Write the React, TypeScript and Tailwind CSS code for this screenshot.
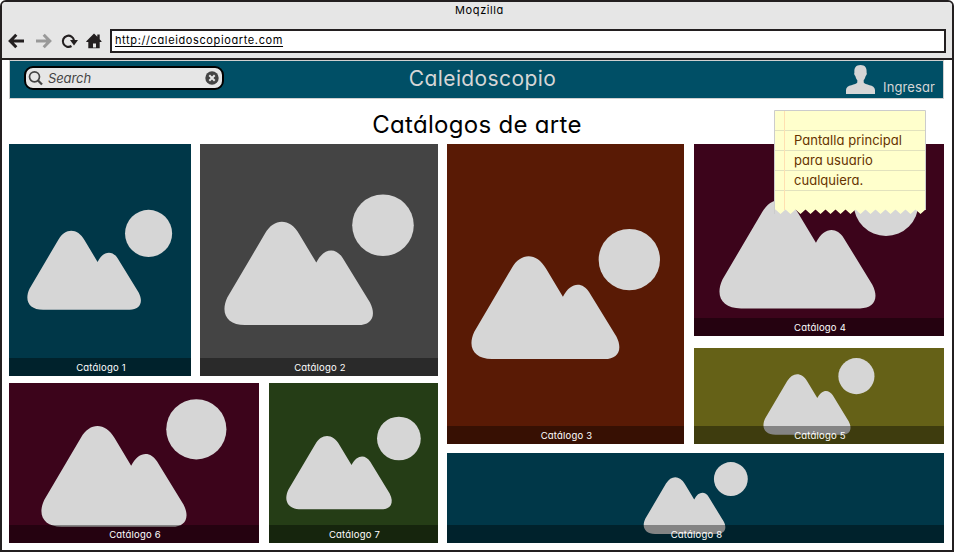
import React from "react";

function Landscape() {
  return (
    <svg viewBox="0 0 190.4 131" className="h-4/5 w-4/5 overflow-visible" fill="#d6d6d6">
      <path d="M3.3 103.3 L41 39.3 C50 23.5 66 23.5 75.3 40 L92.3 68.3 C100 53 112 53 118.7 63.7 L146 108.3 C153 122 147 130.8 134.3 130.8 H21 C3 130.8 -4 119 3.3 103.3Z" />
      <circle cx="159" cy="31" r="30.8" />
    </svg>
  );
}

function Tile({ n, className }: { n: number; className: string }) {
  return (
    <div className={`relative flex shrink-0 items-center justify-center ${className}`}>
      <Landscape />
      <div className="absolute inset-x-0 bottom-0 flex h-[18px] items-center justify-center bg-black/38 pt-[2px] pl-[2px] text-[9.5px] leading-none tracking-[0.2px] text-white">
        Catálogo {n}
      </div>
    </div>
  );
}

function Toolbar() {
  return (
    <div className="flex h-[58px] flex-col border-b-2 border-[#231f20] bg-[#e6e6e6]">
      <div className="h-[27px] pt-[2px] pl-[5px] text-center text-[11px] leading-[13px] tracking-[0.6px]">Moqzilla</div>
      <div className="flex h-6 items-center pr-[6px] pl-[6px]">
        <svg width="17" height="18" viewBox="0 0 17 18" fill="none" stroke="#231f20" strokeWidth="3">
          <path d="M8.300 2.800 2.200 9 8.300 15.200M2.500 9H16" />
        </svg>
        <svg className="ml-[10px]" width="17" height="18" viewBox="0 0 17 18" fill="none" stroke="#999" strokeWidth="3">
          <path d="M8.700 2.800 14.800 9 8.700 15.200M14.500 9H1" />
        </svg>
        <svg className="ml-[9px]" width="18" height="18" viewBox="0 0 18 18">
          <path d="M10.500 14A5.600 5.600 0 1 1 13 8.500" fill="none" stroke="#231f20" strokeWidth="2.100" />
          <path d="M9 8h8l-4 5.500z" fill="#231f20" />
        </svg>
        <svg className="ml-[7px]" width="16" height="18" viewBox="0 0 16 18">
          <path d="M8 1.500 .3 9.200V10H2.300V16.300H13.700V10H15.500V9.200L13.700 7.300V2.500h-2.400V4.800Z" fill="#231f20" />
          <path d="M7 11.500h3v4H7z" fill="#e6e6e6" />
        </svg>
        <div className="ml-2 h-6 flex-1 border-2 border-[#231f20] bg-white pt-[3px] pl-[3px] text-[11px] leading-[13px] tracking-[0.62px]">
          <span className="underline underline-offset-2">http://caleidoscopioarte.com</span>
        </div>
      </div>
    </div>
  );
}

function Header() {
  return (
    <div className="flex h-[39px] justify-between border border-[#d0d0d0] bg-[#004f66] text-[#d6d6d6]">
      <div className="w-[320px] pt-[5px] pl-[14px]">
        <div className="flex h-6 w-[200px] items-center rounded-[9px] border-2 border-black bg-[#e6e6e6] pr-[3px] pl-[2px] text-[#444]">
          <svg width="15" height="16" viewBox="0 0 15 16" fill="none" stroke="#444" strokeWidth="1.7">
            <circle cx="6.5" cy="6.8" r="5" />
            <path d="m10 10.5 4 4" strokeWidth="2.3" />
          </svg>
          <span className="ml-[5px] flex-1 text-[13px] leading-5 tracking-[-0.1px] italic">Search</span>
          <svg width="14" height="14" viewBox="0 0 14 14">
            <circle cx="7" cy="7" r="6.7" fill="#444" />
            <path d="m4.300 4.300 5.400 5.400m0-5.400L4.300 9.700" stroke="#e6e6e6" strokeWidth="2" />
          </svg>
        </div>
      </div>
      <div className="pt-[3px] pl-[12px] text-[21px] leading-[30px] tracking-[0.4px]">Caleidoscopio</div>
      <div className="flex w-[320px] justify-end pt-[4px] pr-[8px]">
        <svg width="29" height="29" viewBox="0 0 29 29" fill="#d6d6d6">
          <path d="M14.5 0C10 0 8 2.700 8.400 7.500c-.6 1 .1 3 .9 3.400.5 2 1.200 3.300 2 4.200v2.400C10.500 20 0 19.500 0 25v4h29v-4c0-5.500-10.500-5-11.300-7.500v-2.400c.8-.9 1.500-2.200 2-4.200.8-.4 1.500-2.400.9-3.400C21 2.700 19 0 14.500 0Z" />
        </svg>
        <span className="mt-[14px] ml-[8px] text-[13px] leading-4 tracking-[0.1px]">Ingresar</span>
      </div>
    </div>
  );
}

function Note() {
  const teeth = Array.from({ length: 15 }, (_, i) => `L${146.5 - i * 10} 104 L${141.5 - i * 10} 99.500`).join(" ");
  return (
    <div className="absolute top-[108px] left-[772px] h-[105px] w-[152px]">
      <svg className="absolute inset-0" width="152" height="105" viewBox="0 0 152 105">
        <path d={`M.5 .5H151.500V99.500 ${teeth} L.5 99.500Z`} fill="#ffffcc" />
        <path d="M.5 104V.5H151.500V100" fill="none" stroke="#ccc" />
        <path d="M1 20.500H151M1 40.500H151M1 60.500H151M1 80.500H151" stroke="#e2e2bd" />
        <path d="M10.500 1V100" stroke="#ffe0b0" />
      </svg>
      <div className="relative pt-[20px] pl-[20px] text-[13px] leading-5 tracking-[0.03px] whitespace-nowrap text-[#663300]">
        Pantalla principal
        <br />
        para usuario
        <br />
        cualquiera.
      </div>
    </div>
  );
}

export default function App() {
  return (
    <div className="h-[552px] w-[960px] overflow-hidden bg-white font-['Inter',sans-serif] text-black [font-feature-settings:'cv11']">
      <div className="relative h-[552px] w-[954px] overflow-hidden rounded-t-[6px] border-2 border-[#231f20] bg-white">
        <Toolbar />
        <main className="pr-[8px] pl-[7px]">
          <Header />
          <h1 className="h-[45px] pt-[9px] pl-px text-center text-[24px] leading-[34px] tracking-[0.3px]">Catálogos de arte</h1>
          <div className="flex gap-[9px]">
            <div className="flex flex-col gap-[7px]">
              <div className="flex gap-[9px]">
                <Tile n={1} className="h-[232px] w-[182px] bg-[#003748]" />
                <Tile n={2} className="h-[232px] w-[238px] bg-[#444444]" />
              </div>
              <div className="flex gap-[10px]">
                <Tile n={6} className="h-[160px] w-[250px] bg-[#3c041b]" />
                <Tile n={7} className="h-[160px] w-[169px] bg-[#253d16]" />
              </div>
            </div>
            <div className="flex flex-col gap-[9px]">
              <div className="flex gap-[10px]">
                <Tile n={3} className="h-[300px] w-[237px] bg-[#591a05]" />
                <div className="flex flex-col gap-[12px]">
                  <Tile n={4} className="h-[192px] w-[250px] bg-[#3c041b]" />
                  <Tile n={5} className="h-[96px] w-[250px] bg-[#656117]" />
                </div>
              </div>
              <Tile n={8} className="h-[90px] w-[497px] bg-[#003748]" />
            </div>
          </div>
        </main>
        <Note />
      </div>
    </div>
  );
}
